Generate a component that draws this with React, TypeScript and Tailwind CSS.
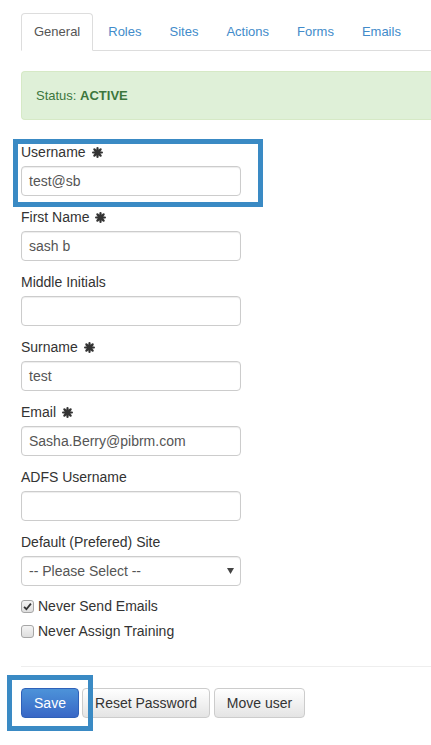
import React from "react";

const tabs = ["General", "Roles", "Sites", "Actions", "Forms", "Emails"];

function Req() {
  return (
    <svg width="11" height="11" viewBox="0 0 20 20" className="ml-[6px] mt-[2px] inline-block">
      <g stroke="#333" strokeWidth="4" strokeLinecap="round">
        <line x1="10" y1="2" x2="10" y2="18" />
        <line x1="2" y1="10" x2="18" y2="10" />
        <line x1="4.3" y1="4.3" x2="15.7" y2="15.7" />
        <line x1="15.7" y1="4.3" x2="4.3" y2="15.7" />
      </g>
      <circle cx="10" cy="10" r="5.5" fill="#333" />
    </svg>
  );
}

function Field({ label, value, required }: { label: string; value?: string; required?: boolean }) {
  return (
    <div className="mb-[10px]">
      <div className="flex h-[20px] items-center leading-[20px] mb-[5px] pt-[1px] text-[#333]">
        {label}
        {required && <Req />}
      </div>
      <div className="h-[30px] w-[220px] rounded border border-[#ccc] bg-white px-[7px] leading-[28px] text-[#555] shadow-[inset_0_1px_1px_rgba(0,0,0,0.075)]">
        {value}
      </div>
    </div>
  );
}

function Check({ checked, label }: { checked?: boolean; label: string }) {
  return (
    <div className="flex h-[20px] items-center text-[#333]">
      <span className="mr-[4px] flex h-[13px] w-[13px] items-center justify-center rounded-[3px] border border-[#a6a6a6] bg-gradient-to-b from-[#f4f4f4] to-[#dedede]">
        {checked && (
          <svg width="9" height="9" viewBox="0 0 10 10">
            <path d="M1.2 5.4 L3.8 8 L8.8 1.8" fill="none" stroke="#333" strokeWidth="2" />
          </svg>
        )}
      </span>
      {label}
    </div>
  );
}

export default function App() {
  return (
    <div className="min-h-[745px] w-[431px] overflow-hidden bg-white pl-[21px] pt-[13px] font-['Liberation_Sans',Arial,sans-serif] text-[14px]">
      <ul className="flex border-b border-[#ddd] text-[13px]">
        {tabs.map((t, i) => (
          <li key={t} className="mr-[2px]">
            <div
              className={
                i === 0
                  ? "-mb-px h-[38px] rounded-t border border-[#ddd] border-b-white bg-white px-[12px] leading-[36px] text-[#555]"
                  : "-mb-px h-[38px] rounded-t border border-transparent px-[12px] leading-[36px] text-[#428bca]"
              }
            >
              {t}
            </div>
          </li>
        ))}
      </ul>

      <div className="mt-[20px] flex h-[49px] items-center rounded-l border border-r-0 border-[#d6e9c6] bg-[#dff0d8] px-[14px] text-[13px] text-[#3c763d]">
        Status:&nbsp;<b>ACTIVE</b>
      </div>

      <div className="mt-[21px]">
        <div className="relative">
          <span className="absolute left-[-8px] top-[-2px] h-[68px] w-[250px] border-[5px] border-[#3a8ac4]" />
          <Field label="Username" value="test@sb" required />
        </div>
        <Field label="First Name" value="sash b" required />
        <Field label="Middle Initials" />
        <Field label="Surname" value="test" required />
        <Field label="Email" value="Sasha.Berry@pibrm.com" required />
        <Field label="ADFS Username" />

        <div className="mb-[10px]">
          <div className="h-[20px] leading-[20px] mb-[5px] pt-[1px] text-[#333]">Default (Prefered) Site</div>
          <div className="flex h-[30px] w-[220px] items-center justify-between rounded border border-[#ccc] bg-white pl-[7px] pr-[6px] text-[#555] shadow-[inset_0_1px_1px_rgba(0,0,0,0.075)]">
            <span>-- Please Select --</span>
            <svg width="7" height="6" viewBox="0 0 7 6">
              <path d="M0 0 H7 L3.5 6 Z" fill="#444" />
            </svg>
          </div>
        </div>

        <div className="flex flex-col gap-[5px]">
          <Check checked label="Never Send Emails" />
          <Check label="Never Assign Training" />
        </div>
      </div>

      <div className="mt-[25px] border-t border-[#eee]" />

      <div className="mt-[21px] flex gap-[4px]">
        <div className="relative mr-[-1px]">
          <span className="absolute left-[-14px] top-[-13px] h-[56px] w-[86px] border-[5px] border-[#3a8ac4]" />
          <button className="relative h-[30px] w-[58px] rounded border border-[#2f61b8] bg-gradient-to-b from-[#4d93d9] to-[#3967c6] text-white">
            Save
          </button>
        </div>
        <button className="h-[30px] w-[128px] rounded border border-[#ccc] bg-gradient-to-b from-white to-[#e4e4e4] text-[#333]">
          Reset Password
        </button>
        <button className="h-[30px] w-[91px] rounded border border-[#ccc] bg-gradient-to-b from-white to-[#e4e4e4] text-[#333]">
          Move user
        </button>
      </div>
    </div>
  );
}
